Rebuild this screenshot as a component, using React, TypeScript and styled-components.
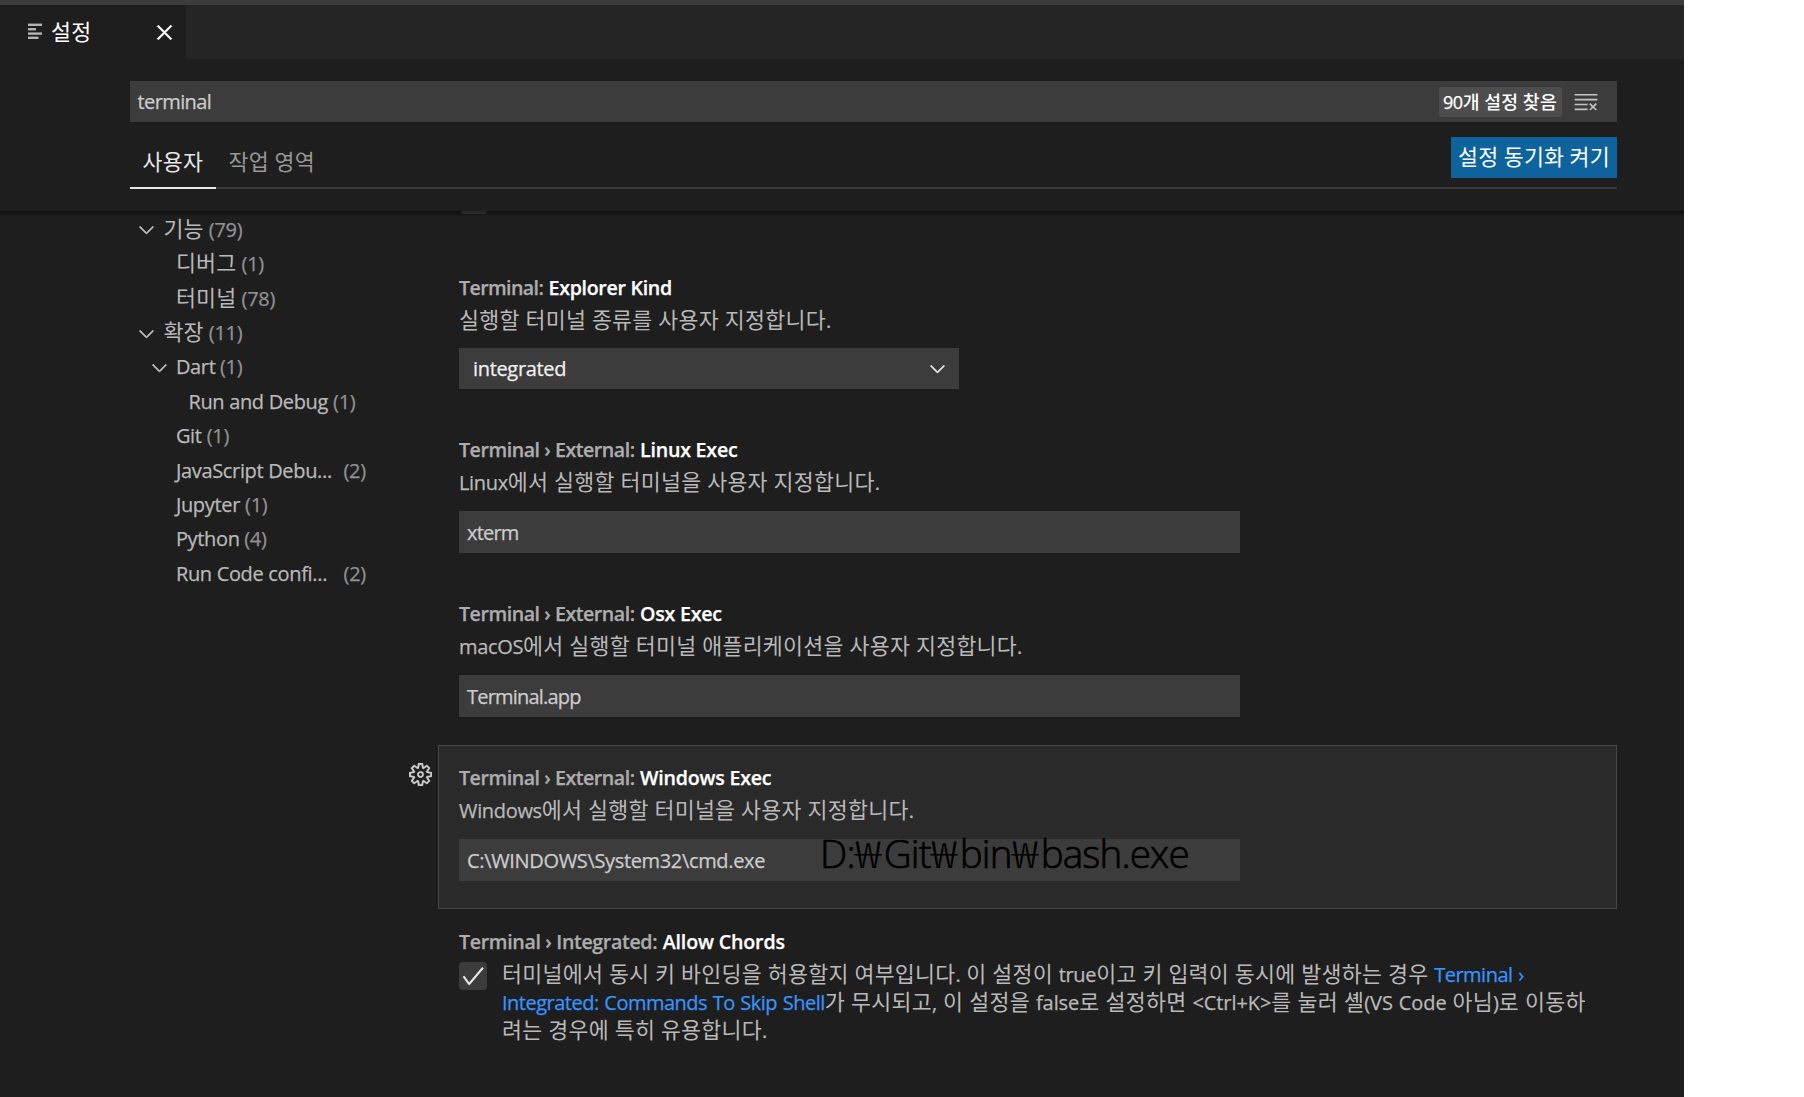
import React from 'react';
import styled, { createGlobalStyle } from 'styled-components';
import { VscCheck, VscChevronDown, VscClearAll, VscClose, VscSettingsGear } from 'react-icons/vsc';

const GlobalStyle = createGlobalStyle`
  body {
    margin: 0;
    background: #ffffff;
  }
  * {
    box-sizing: border-box;
  }
`;

const Editor = styled.div`
  display: flex;
  flex-direction: column;
  width: 1684px;
  height: 1097px;
  overflow: hidden;
  background: #1e1e1e;
  color: #b9b9b9;
  font-family: 'Open Sans', 'Noto Sans CJK KR', sans-serif;
  font-size: 20px;
  letter-spacing: -0.33px;
  white-space: nowrap;
  -webkit-text-stroke: 0.25px;
`;

/* Hangul runs are set larger than Latin ones and never stretch their line. */
const Hangul = styled.span<{ $size?: number; $spacing?: number }>`
  font-family: 'Noto Sans CJK KR', sans-serif;
  font-size: ${p => p.$size ?? 21.7}px;
  font-weight: ${p => (p.$size ? 500 : 400)};
  line-height: 0;
  letter-spacing: ${p => p.$spacing ?? 0.27}px;
  -webkit-text-stroke: 0;
`;

const TitleStrip = styled.div`
  flex: none;
  height: 5px;
  background: #3c3c3c;
`;

const TabBar = styled.div`
  display: flex;
  flex: none;
  height: 54px;
  background: #252526;
`;

const EditorTab = styled.div`
  display: flex;
  align-items: center;
  width: 186px;
  padding: 0 8px 0 27px;
  background: #1e1e1e;
  color: #ffffff;
`;

const TabLabel = styled.span`
  flex: 1;
  padding: 1px 0 0 8px;
  line-height: 28px;
`;

const Header = styled.header`
  display: flex;
  flex: none;
  flex-direction: column;
  height: 152px;
  padding: 22px 67px 0 130px;
`;

const SearchBox = styled.div`
  display: flex;
  align-items: center;
  height: 41px;
  padding: 0 18px 0 7.5px;
  background: #3c3c3c;
  color: #cccccc;
`;

const SearchText = styled.span`
  flex: 1;
  letter-spacing: -0.6px;
`;

const CountBadge = styled.span`
  height: 30px;
  margin-right: 11px;
  padding: 0 5px 0 4px;
  border-radius: 3px;
  background: #4d4d4d;
  color: #ffffff;
  font-size: 18px;
  font-weight: 500;
  line-height: 31px;
`;

const ScopeBar = styled.div`
  display: flex;
  justify-content: space-between;
  height: 67px;
  border-bottom: 2px solid #383838;
`;

const ScopeTabs = styled.div`
  display: flex;
  height: 67px;
`;

const ScopeTab = styled.div<{ $active?: boolean }>`
  width: ${p => (p.$active ? '86px' : 'auto')};
  padding: 27px 12px 0 12.6px;
  border-bottom: 2px solid ${p => (p.$active ? '#e7e7e7' : 'transparent')};
  color: ${p => (p.$active ? '#e7e7e7' : '#989898')};
  line-height: 28px;
  word-spacing: 0.6px;
`;

const SyncButton = styled.button`
  height: 41px;
  margin: 15px 0 0;
  padding: 0 7px 0;
  border: 0;
  background: #0e639c;
  color: #ffffff;
  font: inherit;
  letter-spacing: 0;
  line-height: 39px;
`;

const Body = styled.div`
  position: relative;
  display: flex;
  flex: 1;
  min-height: 0;
  overflow: hidden;
`;

const ScrollShadow = styled.div`
  position: absolute;
  top: 0;
  left: 0;
  right: 0;
  height: 5px;
  background: linear-gradient(rgba(0, 0, 0, 0.5), rgba(0, 0, 0, 0.35) 50%, transparent);
`;

const Toc = styled.nav`
  flex: none;
  width: 438px;
  padding: 1.8px 0 0 135px;
`;

const TocRow = styled.div<{ $depth: number }>`
  display: flex;
  align-items: center;
  height: 34.4px;
  padding-left: ${p => p.$depth * 12.5}px;
  line-height: 34.4px;
`;

const Twistie = styled.span`
  display: flex;
  align-items: center;
  width: 28.4px;
  height: 34px;
  color: #c5c5c5;
`;

const TocCount = styled.span<{ $gap: number }>`
  margin-left: ${p => p.$gap}px;
  color: #929292;
  letter-spacing: -0.3px;
`;

const Settings = styled.main`
  display: flex;
  flex-direction: column;
  width: 1179px;
`;

const PreviousItem = styled.div`
  flex: none;
  width: 26px;
  height: 3px;
  margin: 0 0 41px 23px;
  border-radius: 0 0 4px 4px;
  background: #444444;
`;

const Item = styled.section<{ $focused?: boolean; $height?: number }>`
  position: relative;
  flex: none;
  height: ${p => p.$height ?? 164}px;
  padding: 18px 28px 0 20px;
  border: 1px solid ${p => (p.$focused ? '#474747' : 'transparent')};
  background: ${p => (p.$focused ? '#2a2a2a' : 'transparent')};
`;

const ItemGear = styled.div`
  position: absolute;
  left: -30px;
  top: 17px;
  display: flex;
  color: #d0d0d0;
`;

const ItemTitle = styled.h3<{ $spacing?: number }>`
  margin: 0;
  padding-bottom: 1px;
  color: #ffffff;
  font-size: 19.6px;
  font-weight: 600;
  letter-spacing: ${p => p.$spacing ?? -0.22}px;
  line-height: 27px;
`;

const Category = styled.span<{ $spacing?: number }>`
  margin-right: 0.5px;
  color: #adadad;
  letter-spacing: ${p => p.$spacing ?? -0.46}px;
`;

const Description = styled.p`
  margin: 0;
  padding-top: 5px;
  line-height: 28.2px;
  word-spacing: 0.9px;
`;

const SelectBox = styled.div`
  display: flex;
  align-items: center;
  justify-content: space-between;
  width: 500px;
  height: 41px;
  margin-top: 13px;
  padding: 0 10px 0 14px;
  background: #3c3c3c;
  color: #f0f0f0;
`;

const InputBox = styled.div<{ $tight?: boolean }>`
  display: flex;
  align-items: center;
  width: 781px;
  height: 42px;
  margin-top: 14px;
  padding: 2px 8px 0;
  background: #3c3c3c;
  color: #cccccc;
  letter-spacing: ${p => (p.$tight ? -0.8 : -0.34)}px;
`;

const CheckRow = styled.div`
  display: flex;
`;

const CheckBox = styled.span`
  display: flex;
  flex: none;
  align-items: center;
  justify-content: center;
  width: 28px;
  height: 28px;
  margin: 6px 15px 0 0;
  border-radius: 4px;
  background: #3c3c3c;
  color: #f0f0f0;
`;

const SettingLink = styled.a`
  color: #3794ff;
  letter-spacing: -0.5px;
`;

const Loose = styled.span`
  letter-spacing: -0.08px;
`;

/* Replacement value typed over the stored path. */
const Annotation = styled.span`
  position: absolute;
  left: 381px;
  top: 79px;
  color: #000000;
  font-size: 38.6px;
  font-weight: 300;
  letter-spacing: -0.85px;
  line-height: 56px;
  -webkit-text-stroke: 0.7px;
`;

const Won = styled.span`
  display: inline-block;
  width: 29px;
  font-family: 'Noto Sans CJK KR', sans-serif;
  font-size: 37px;
  line-height: 0;
  transform: scaleX(1.32);
  transform-origin: 0 50%;
  -webkit-text-stroke: 0;
`;

const FileLines = () => (
  <svg width="16" height="18" viewBox="0 0 16 18" fill="#b4b4b4">
    <rect x="1" y="0.6" width="14" height="2.4" />
    <rect x="1" y="5" width="8" height="2.4" />
    <rect x="1" y="9.4" width="14" height="2.4" />
    <rect x="1" y="13.6" width="10.5" height="2.4" />
  </svg>
);

/* Splits a string so that every Hangul run gets its own face and size. */
const Text = ({ children, size, spacing }: { children: string; size?: number; spacing?: number }) => (
  <>
    {children.split(/([\uac00-\ud7a3]+)/).map((part, i) =>
      i % 2 ? (
        <Hangul key={i} $size={size} $spacing={spacing}>
          {part}
        </Hangul>
      ) : (
        part
      ),
    )}
  </>
);

const tocRows = [
  { label: '기능', count: 79, depth: 0, open: true, gap: 5 },
  { label: '디버그', count: 1, depth: 1, gap: 5 },
  { label: '터미널', count: 78, depth: 1, gap: 5 },
  { label: '확장', count: 11, depth: 0, open: true, gap: 5 },
  { label: 'Dart', count: 1, depth: 1, open: true, gap: 4.5 },
  { label: 'Run and Debug', count: 1, depth: 2, gap: 5 },
  { label: 'Git', count: 1, depth: 1, gap: 5 },
  { label: 'JavaScript Debu...', count: 2, depth: 1, gap: 11.5 },
  { label: 'Jupyter', count: 1, depth: 1, gap: 5 },
  { label: 'Python', count: 4, depth: 1, gap: 4.5 },
  { label: 'Run Code confi...', count: 2, depth: 1, gap: 16.5 },
];

const textSettings = [
  {
    category: 'Terminal › External:',
    name: 'Linux Exec',
    description: 'Linux에서 실행할 터미널을 사용자 지정합니다.',
    value: 'xterm',
  },
  {
    category: 'Terminal › External:',
    name: 'Osx Exec',
    description: 'macOS에서 실행할 터미널 애플리케이션을 사용자 지정합니다.',
    value: 'Terminal.app',
  },
  {
    category: 'Terminal › External:',
    name: 'Windows Exec',
    description: 'Windows에서 실행할 터미널을 사용자 지정합니다.',
    value: 'C:\\WINDOWS\\System32\\cmd.exe',
    replacement: 'D:₩Git₩bin₩bash.exe',
  },
];

export default function App() {
  return (
    <>
      <GlobalStyle />
      <Editor>
        <TitleStrip />
        <TabBar>
          <EditorTab>
            <FileLines />
            <TabLabel>
              <Text>설정</Text>
            </TabLabel>
            <VscClose size={27} strokeWidth={0.4} />
          </EditorTab>
        </TabBar>

        <Header>
          <SearchBox>
            <SearchText>terminal</SearchText>
            <CountBadge>
              <Text size={18.3}>90개 설정 찾음</Text>
            </CountBadge>
            <VscClearAll size={26} color="#c5c5c5" />
          </SearchBox>
          <ScopeBar>
            <ScopeTabs>
              <ScopeTab $active>
                <Text>사용자</Text>
              </ScopeTab>
              <ScopeTab>
                <Text>작업 영역</Text>
              </ScopeTab>
            </ScopeTabs>
            <SyncButton>
              <Text>설정 동기화 켜기</Text>
            </SyncButton>
          </ScopeBar>
        </Header>

        <Body>
          <Toc>
            {tocRows.map(row => (
              <TocRow key={row.label} $depth={row.depth}>
                <Twistie>{row.open && <VscChevronDown size={23} strokeWidth={0.4} />}</Twistie>
                <span>
                  <Text>{row.label}</Text>
                </span>
                <TocCount $gap={row.gap}>({row.count})</TocCount>
              </TocRow>
            ))}
          </Toc>

          <Settings>
            <PreviousItem />
            <Item $height={161.5}>
              <ItemTitle $spacing={-0.3}>
                <Category $spacing={-0.6}>Terminal:</Category> Explorer Kind
              </ItemTitle>
              <Description>
                <Text>실행할 터미널 종류를 사용자 지정합니다.</Text>
              </Description>
              <SelectBox>
                integrated
                <VscChevronDown size={23} strokeWidth={0.4} />
              </SelectBox>
            </Item>

            {textSettings.map(setting => (
              <Item key={setting.name} $focused={!!setting.replacement}>
                {setting.replacement && (
                  <ItemGear>
                    <VscSettingsGear size={23} strokeWidth={0.3} />
                  </ItemGear>
                )}
                <ItemTitle>
                  <Category>{setting.category}</Category> {setting.name}
                </ItemTitle>
                <Description>
                  <Text>{setting.description}</Text>
                </Description>
                <InputBox $tight={!setting.replacement}>{setting.value}</InputBox>
                {setting.replacement && (
                  <Annotation>
                    {setting.replacement.split(/(₩)/).map((part, i) => (i % 2 ? <Won key={i}>{part}</Won> : part))}
                  </Annotation>
                )}
              </Item>
            ))}

            <Item>
              <ItemTitle $spacing={-0.15}>
                <Category $spacing={-0.34}>Terminal › Integrated:</Category> Allow Chords
              </ItemTitle>
              <CheckRow>
                <CheckBox>
                  <VscCheck size={26} strokeWidth={0.3} />
                </CheckBox>
                <Description>
                  <Text>터미널에서 동시 키 바인딩을 허용할지 여부입니다. 이 설정이 true이고 키 입력이 동시에 발생하는 경우 </Text>
                  <SettingLink>
                    Terminal ›<br />
                    Integrated: Commands To Skip Shell
                  </SettingLink>
                  <Loose>
                    <Text>{'가 무시되고, 이 설정을 false로 설정하면 <Ctrl+K>를 눌러 셸(VS Code 아님)로 이동하'}</Text>
                  </Loose>
                  <br />
                  <Text>려는 경우에 특히 유용합니다.</Text>
                </Description>
              </CheckRow>
            </Item>
          </Settings>
          <ScrollShadow />
        </Body>
      </Editor>
    </>
  );
}
